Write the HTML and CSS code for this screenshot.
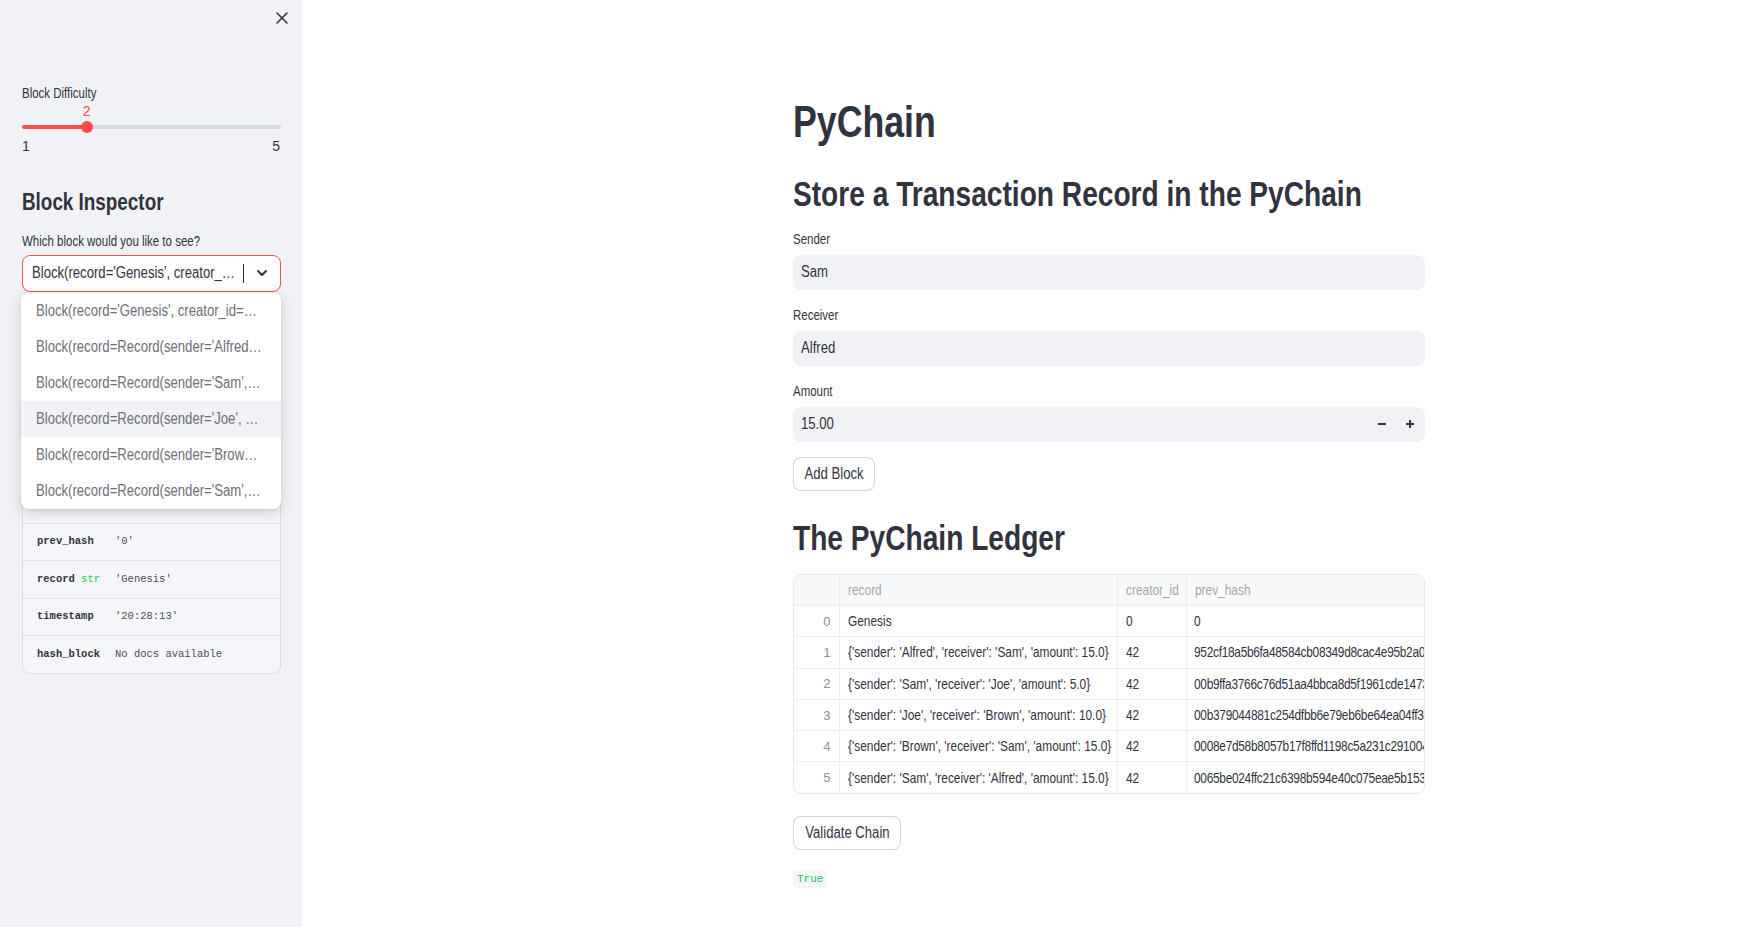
FILE: index.html
```html
<!DOCTYPE html>
<html lang="en">
<head>
<meta charset="utf-8">
<title>PyChain</title>
<link rel="stylesheet" href="styles.css">
</head>
<body>
<div class="app">
  <aside class="sidebar">
    <div class="sb-top">
      <button class="close" aria-label="Close sidebar">
        <svg width="14" height="14" viewBox="0 0 14 14"><path d="M2 2 L12 12 M12 2 L2 12" stroke="#31333f" stroke-width="1.6" stroke-linecap="round" fill="none"/></svg>
      </button>
    </div>

    <div class="slider">
      <div class="label"><span class="sq">Block Difficulty</span></div>
      <div class="slider-body">
        <div class="track">
          <div class="fill" style="width:25%"></div>
          <div class="thumb" style="left:25%"><span class="thumb-val">2</span></div>
        </div>
        <div class="ticks"><span>1</span><span>5</span></div>
      </div>
    </div>

    <h3 class="sb-heading"><span class="sq">Block Inspector</span></h3>
    <div class="label"><span class="sq">Which block would you like to see?</span></div>
    <div class="select-wrap">
      <div class="select">
        <span class="sel-box"><span class="sq ell sel-text">Block(record='Genesis', creator_id=0, prev_hash='0', timestamp='20:28:13')</span></span>
        <span class="caret"></span>
        <svg class="chev" width="12" height="8" viewBox="0 0 12 8"><path d="M2 2 L6 6 L10 2" stroke="#31333f" stroke-width="2" fill="none" stroke-linecap="round" stroke-linejoin="round"/></svg>
      </div>
      <ul class="menu">
        <li><span class="sq ell">Block(record='Genesis', creator_id=0, prev_hash='0', timestamp='20:28:13')</span></li>
        <li><span class="sq ell">Block(record=Record(sender='Alfred', receiver='Sam', amount=15.0))</span></li>
        <li><span class="sq ell">Block(record=Record(sender='Sam', receiver='Joe', amount=5.0))</span></li>
        <li class="hover"><span class="sq ell">Block(record=Record(sender='Joe', receiver='Brown', amount=10.0))</span></li>
        <li><span class="sq ell">Block(record=Record(sender='Brown', receiver='Sam', amount=15.0))</span></li>
        <li><span class="sq ell">Block(record=Record(sender='Sam', receiver='Alfred', amount=15.0))</span></li>
      </ul>
    </div>

    <div class="help-card">
      <div class="help-head">
        <div class="help-title">Block</div>
        <div class="help-doc">Block(record: Any, creator_id: int, prev_hash: str = '0', timestamp: str = '20:28:13', nonce: int = 0)</div>
      </div>
      <div class="help-row"><span class="hn">creator_id <i>int</i></span><span class="hv">0</span></div>
      <div class="help-row"><span class="hn">nonce <i>int</i></span><span class="hv">0</span></div>
      <div class="help-row"><span class="hn">prev_hash</span><span class="hv">'0'</span></div>
      <div class="help-row"><span class="hn">record <i>str</i></span><span class="hv">'Genesis'</span></div>
      <div class="help-row"><span class="hn">timestamp</span><span class="hv">'20:28:13'</span></div>
      <div class="help-row"><span class="hn">hash_block</span><span class="hv">No docs available</span></div>
    </div>
  </aside>

  <main class="main">
    <div class="block">
      <h1 class="title"><span class="sq">PyChain</span></h1>
      <h2 class="h2 first"><span class="sq">Store a Transaction Record in the PyChain</span></h2>

      <div class="field">
        <div class="label"><span class="sq">Sender</span></div>
        <div class="input"><span class="sq">Sam</span></div>
      </div>
      <div class="field">
        <div class="label"><span class="sq">Receiver</span></div>
        <div class="input"><span class="sq">Alfred</span></div>
      </div>
      <div class="field">
        <div class="label"><span class="sq">Amount</span></div>
        <div class="input number">
          <span class="sq">15.00</span>
          <span class="steps">
            <svg width="10" height="10" viewBox="0 0 10 10"><rect x="1" y="4" width="8" height="2" fill="#31333f"/></svg>
            <svg width="10" height="10" viewBox="0 0 10 10"><rect x="1" y="4" width="8" height="2" fill="#31333f"/><rect x="4" y="1" width="2" height="8" fill="#31333f"/></svg>
          </span>
        </div>
      </div>
      <button class="btn add"><span class="sq c">Add Block</span></button>

      <h2 class="h2 ledger"><span class="sq">The PyChain Ledger</span></h2>
      <div class="grid">
        <table>
          <colgroup><col class="c0"><col class="c1"><col class="c2"><col class="c3"></colgroup>
          <thead>
            <tr><th></th><th><span class="sq">record</span></th><th><span class="sq">creator_id</span></th><th><span class="sq">prev_hash</span></th></tr>
          </thead>
          <tbody>
            <tr><td class="idx">0</td><td><span class="sq">Genesis</span></td><td><span class="sq">0</span></td><td class="hash"><span class="sq">0</span></td></tr>
            <tr><td class="idx">1</td><td><span class="sq">{'sender': 'Alfred', 'receiver': 'Sam', 'amount': 15.0}</span></td><td><span class="sq">42</span></td><td class="hash"><span class="sq">952cf18a5b6fa48584cb08349d8cac4e95b2a0f1</span></td></tr>
            <tr><td class="idx">2</td><td><span class="sq">{'sender': 'Sam', 'receiver': 'Joe', 'amount': 5.0}</span></td><td><span class="sq">42</span></td><td class="hash"><span class="sq">00b9ffa3766c76d51aa4bbca8d5f1961cde14732</span></td></tr>
            <tr><td class="idx">3</td><td><span class="sq">{'sender': 'Joe', 'receiver': 'Brown', 'amount': 10.0}</span></td><td><span class="sq">42</span></td><td class="hash"><span class="sq">00b379044881c254dfbb6e79eb6be64ea04ff3a1</span></td></tr>
            <tr><td class="idx">4</td><td><span class="sq">{'sender': 'Brown', 'receiver': 'Sam', 'amount': 15.0}</span></td><td><span class="sq">42</span></td><td class="hash"><span class="sq">0008e7d58b8057b17f8ffd1198c5a231c2910042</span></td></tr>
            <tr><td class="idx">5</td><td><span class="sq">{'sender': 'Sam', 'receiver': 'Alfred', 'amount': 15.0}</span></td><td><span class="sq">42</span></td><td class="hash"><span class="sq">0065be024ffc21c6398b594e40c075eae5b15377</span></td></tr>
          </tbody>
        </table>
      </div>

      <button class="btn validate"><span class="sq c">Validate Chain</span></button>
      <div class="result"><code>True</code></div>
    </div>
  </main>
</div>
</body>
</html>
```

FILE: styles.css
```css
* { box-sizing: border-box; }
html, body { margin: 0; padding: 0; }
body {
  font-family: "Liberation Sans", Arial, sans-serif;
  color: #31333f;
  background: #ffffff;
  width: 1753px;
  height: 927px;
  overflow: hidden;
}
.app { display: flex; height: 927px; }

/* condensed text rendering (matches the narrow UI face) */
.sq {
  display: inline-block;
  white-space: nowrap;
  transform: scaleX(0.82);
  transform-origin: left center;
}
.sq.c { transform-origin: center center; }
.sq.ell { overflow: hidden; text-overflow: ellipsis; vertical-align: middle; }

/* ---------- sidebar ---------- */
.sidebar {
  width: 302px;
  flex: none;
  background: #f0f2f6;
  padding: 0 21px 0 22px;
  height: 100%;
}
.sb-top { height: 36px; display: flex; justify-content: flex-end; align-items: center; margin-right: -8px; }
.close { background: none; border: 0; padding: 0; width: 14px; height: 14px; display: flex; }
.label { font-size: 14px; line-height: 20px; color: #31333f; white-space: nowrap; }
.slider { margin-top: 47px; }
.slider-body { padding-top: 22px; }
.track { position: relative; height: 4px; border-radius: 2px; background: #d6dae3; }
.fill { height: 4px; border-radius: 2px; background: #ff4b4b; }
.thumb {
  position: absolute; top: 50%; width: 12px; height: 12px; margin: -6px 0 0 -6px;
  border-radius: 50%; background: #ff4b4b;
}
.thumb-val {
  position: absolute; left: 50%; bottom: 14px; transform: translateX(-50%);
  font-size: 14px; line-height: 16px; color: #ff4b4b;
}
.ticks { display: flex; justify-content: space-between; margin-top: 7px; font-size: 14px; line-height: 20px; }
.ticks span:last-child { margin-right: 1px; }

.sb-heading { margin: 31.5px 0 0; font-size: 23px; line-height: 28.8px; font-weight: 700; }
.sb-heading + .label { margin-top: 14.5px; }

.select-wrap { position: relative; margin-top: 4px; }
.select {
  height: 37px; border: 1px solid #ff4b4b; border-radius: 8px; background: #fff;
  display: flex; align-items: center; padding: 0 0 0 9px; font-size: 16px;
}
.sel-box { width: 206px; flex: none; display: flex; align-items: center; }
.sel-text { width: 251px; flex: none; }
.caret { width: 1px; height: 19px; background: #31333f; margin-left: 5px; flex: none; }
.chev { margin-left: 12px; flex: none; }
.menu {
  position: absolute; left: -1px; right: 0; top: calc(100% + 1px);
  margin: 0; padding: 0; list-style: none; background: #fff; border-radius: 8px;
  box-shadow: 0 4px 14px rgba(0,0,0,0.16), 0 1px 3px rgba(0,0,0,0.08);
  overflow: hidden; z-index: 5;
}
.menu li {
  height: 36px; line-height: 36px; padding: 0 0 0 15px; font-size: 16px;
  color: #6d6f7a; white-space: nowrap; overflow: hidden;
}
.menu li .sq { width: 276px; line-height: 36px; vertical-align: top; }
.menu li.hover { background: #f0f2f6; }

.help-card {
  margin-top: 16px; border: 1px solid #d9dce3; border-radius: 8px; background: #f5f6f9;
  font-family: "Liberation Mono", "DejaVu Sans Mono", monospace; font-size: 10.5px;
}
.help-head { height: 139px; padding: 12px 14px; overflow: hidden; }
.help-title { font-weight: 700; font-size: 13px; margin-bottom: 8px; }
.help-doc { color: #555; line-height: 16px; }
.help-row {
  height: 37.5px; border-top: 1px dotted #d2d5dc; display: flex; align-items: center;
  padding: 0 14px 2px 14px;
}
.hn { width: 63px; flex: none; overflow: hidden; white-space: nowrap; font-weight: 700; color: #31333f; }
.hn i { font-style: normal; font-weight: 400; color: #21c354; }
.hv { margin-left: 15px; color: #4b4d58; white-space: nowrap; }

/* ---------- main ---------- */
.main { flex: 1; min-width: 0; }
.block { width: 632px; margin-left: 491px; padding-top: 96px; }
.title { margin: 0; font-size: 43.5px; line-height: 52px; font-weight: 700; white-space: nowrap; }
.h2 { margin: 0; font-size: 34.3px; line-height: 43px; font-weight: 700; white-space: nowrap; }
.h2.first { margin-top: 25px; margin-bottom: 12.5px; }
.field { margin-bottom: 15px; }
.field .label { margin-bottom: 6px; }
.input {
  height: 35px; border-radius: 8px; background: #f0f2f6; display: flex; align-items: center;
  padding: 0 8px; font-size: 16px; color: #31333f;
}
.input.number { justify-content: space-between; padding-right: 10px; }
.steps { display: flex; gap: 18px; }
.btn {
  height: 34px; padding: 0; border: 1px solid rgba(49,51,63,0.2); border-radius: 8px;
  background: #fff; font-family: inherit; font-size: 16px; color: #31333f;
  display: flex; align-items: center; justify-content: center; overflow: visible;
}
.btn.add { width: 82px; }
.btn.validate { width: 108px; margin-top: 22px; }
.h2.ledger { margin-top: 26.5px; margin-bottom: 13.5px; }

.grid { border: 1px solid #e6e8ee; border-radius: 8px; overflow: hidden; width: 632px; }
.grid table { border-collapse: collapse; table-layout: fixed; width: 700px; font-size: 14.5px; }
.c0 { width: 45px; } .c1 { width: 278px; } .c2 { width: 69px; } .c3 { width: 308px; }
.grid th, .grid td {
  height: 31.3px; padding: 0 8px; text-align: left; white-space: nowrap; overflow: hidden;
  border-right: 1px solid #eceef2; border-bottom: 1px solid #eceef2; font-weight: 400;
}
.grid th { height: 31px; background: #f8f9fb; color: #a3a6ae; }
.grid tbody tr:last-child td { border-bottom: 0; }
.grid td.idx { text-align: right; color: #8d9099; padding-right: 8px; font-size: 13px; }
.grid td.hash { letter-spacing: -0.35px; padding-left: 7px; }

.result { margin-top: 18px; }
.result code {
  display: inline-block; background: #f5f6f8; border-radius: 4px;
  padding: 2px 4px; line-height: 14px; font-family: "Liberation Mono", "DejaVu Sans Mono", monospace;
  font-size: 11px; color: #21c354;
}
```
